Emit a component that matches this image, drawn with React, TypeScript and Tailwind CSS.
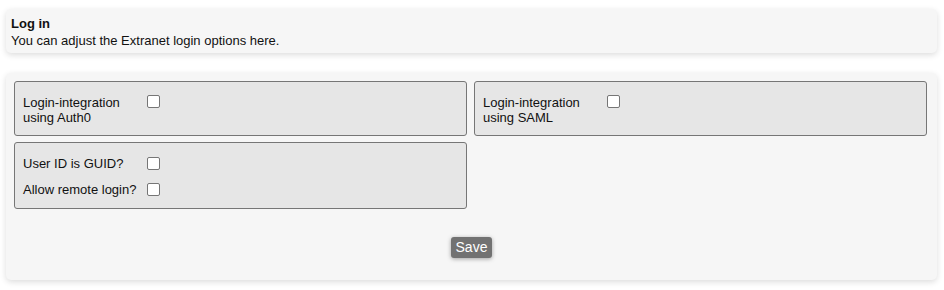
import React from "react";

function Check() {
  return (
    <span className="inline-block w-[13px] h-[13px] shrink-0 bg-white border border-[#767676] rounded-[2px]" />
  );
}

function Row({ label }: { label: React.ReactNode }) {
  return (
    <div className="flex items-start">
      <div className="w-[124px] leading-[15px]">{label}</div>
      <Check />
    </div>
  );
}

function RowInline({ label }: { label: string }) {
  return (
    <div className="flex items-center h-[26px]">
      <div className="w-[124px] leading-[15px]">{label}</div>
      <Check />
    </div>
  );
}

export default function App() {
  return (
    <div
      className="w-[944px] h-[290px] bg-white text-[13px] text-[#111] pt-[9px]"
      style={{ fontFamily: '"Liberation Sans", Arial, sans-serif' }}
    >
      <div className="ml-[6px] w-[931px] rounded-[5px] bg-[#f6f6f6] shadow-[0_2px_6px_rgba(0,0,0,0.14)] pl-[5px] pt-[6px] pb-[4px]">
        <div className="font-bold leading-[17px]">Log in</div>
        <div className="leading-[17px]">You can adjust the Extranet login options here.</div>
      </div>

      <div className="ml-[6px] mt-[20px] w-[931px] h-[207px] rounded-[5px] bg-[#f6f6f6] shadow-[0_2px_6px_rgba(0,0,0,0.14)] pl-[8px] pt-[8px] flex flex-col">
        <div className="grid grid-cols-[453px_453px] gap-x-[7px] gap-y-[6px] items-start">
          <div className="h-[55px] bg-[#e6e6e6] border border-[#767676] rounded-[3px] pl-[8px] pt-[13px]">
            <Row label={<>Login-integration<br />using Auth0</>} />
          </div>
          <div className="h-[55px] bg-[#e6e6e6] border border-[#767676] rounded-[3px] pl-[8px] pt-[13px]">
            <Row label={<>Login-integration<br />using SAML</>} />
          </div>
          <div className="h-[67px] bg-[#e6e6e6] border border-[#767676] rounded-[3px] pl-[8px] pt-[7px]">
            <RowInline label="User ID is GUID?" />
            <RowInline label="Allow remote login?" />
          </div>
        </div>
        <div className="flex justify-center mt-[28px] pr-[8px]">
          <button className="h-[21px] px-[5px] bg-[#727272] text-white text-[14px] leading-[21px] rounded-[3px] shadow-[0_1px_4px_rgba(0,0,0,0.35)]">
            Save
          </button>
        </div>
      </div>
    </div>
  );
}
